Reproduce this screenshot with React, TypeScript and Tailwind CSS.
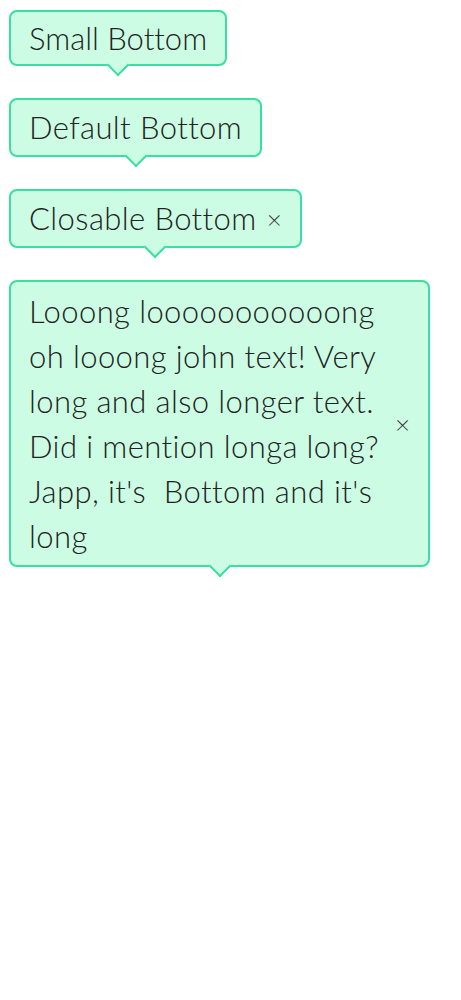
const FONT = "font-['Lato','Noto_Sans',sans-serif]";

function Tip({
  children,
  small = false,
  onClose,
  long = false,
}: {
  children: React.ReactNode;
  small?: boolean;
  onClose?: boolean;
  long?: boolean;
}) {
  return (
    <div
      className={`relative flex w-fit max-w-[421px] items-center gap-[10px] rounded-[8px] border-2 border-[#38e09f] bg-[#ccfce3] px-[18px] ${
        small ? "py-[3.5px]" : long ? "py-[6.5px]" : "py-[5px]"
      }`}
    >
      <div
        className={`text-[31px] leading-[45px] font-light text-[#222] [font-variant-ligatures:none] ${
          small ? "tracking-normal" : "tracking-[0.4px]"
        }`}
      >
        {children}
      </div>
      {onClose && (
        <button className="shrink-0 text-[26px] leading-none font-light text-[#333]">×</button>
      )}
      <span className="absolute bottom-[-9px] left-1/2 h-4 w-4 -translate-x-1/2 rotate-45 border-r-2 border-b-2 border-[#38e09f] bg-[#ccfce3]" />
    </div>
  );
}

export default function App() {
  return (
    <div className={`${FONT} flex min-h-screen flex-col gap-[32px] bg-white pt-[10px] pl-[9px]`}>
      <Tip small>Small Bottom</Tip>
      <Tip>Default Bottom</Tip>
      <Tip onClose>Closable Bottom</Tip>
      <Tip onClose long>
        Looong looooooooooong oh looong john text! Very long and also longer text. Did i mention
        longa long? Japp, it's&nbsp; Bottom and it's long
      </Tip>
    </div>
  );
}
